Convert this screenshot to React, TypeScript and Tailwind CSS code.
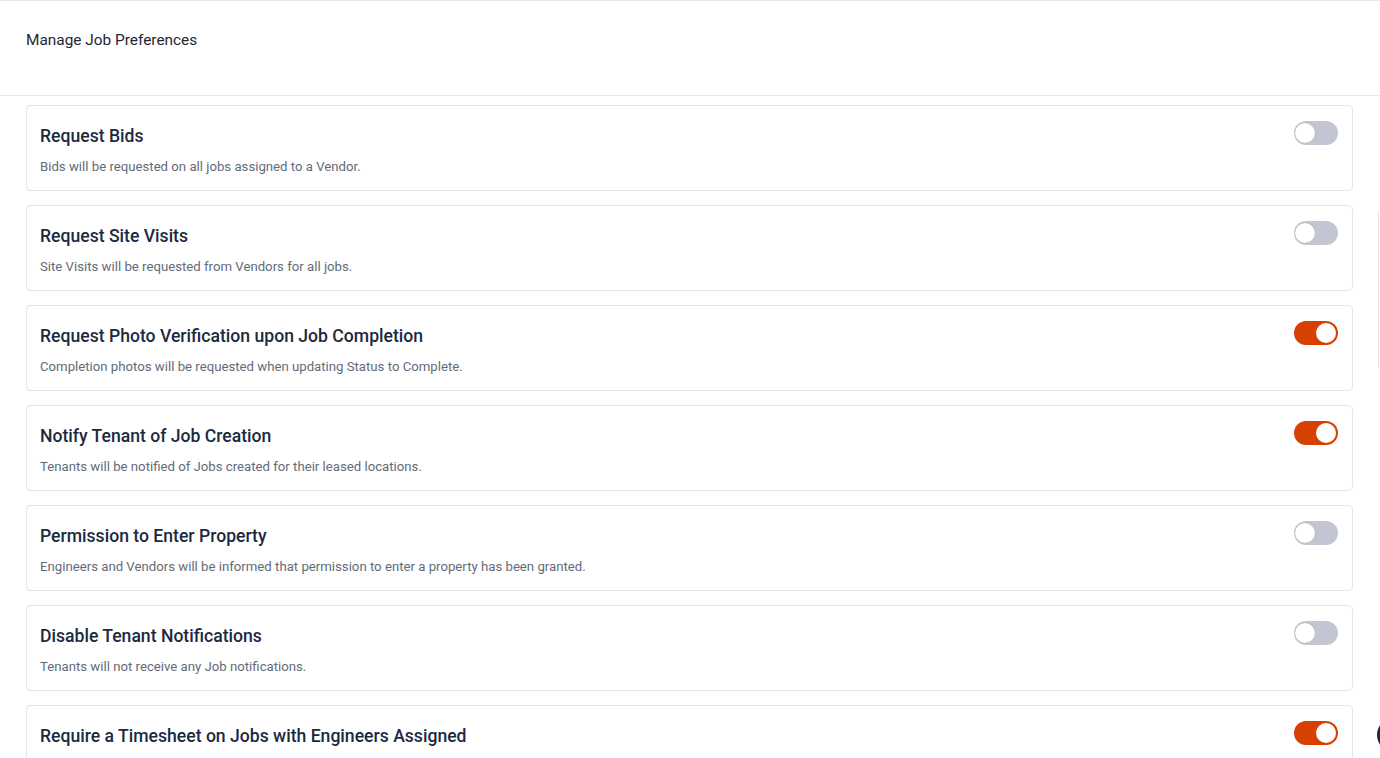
import { type FC, useState } from "react";

type Preference = {
  id: string;
  title: string;
  description: string;
  enabled: boolean;
};

const initialPreferences: Preference[] = [
  {
    id: "bids",
    title: "Request Bids",
    description: "Bids will be requested on all jobs assigned to a Vendor.",
    enabled: false,
  },
  {
    id: "siteVisits",
    title: "Request Site Visits",
    description: "Site Visits will be requested from Vendors for all jobs.",
    enabled: false,
  },
  {
    id: "photoVerification",
    title: "Request Photo Verification upon Job Completion",
    description:
      "Completion photos will be requested when updating Status to Complete.",
    enabled: true,
  },
  {
    id: "notifyTenant",
    title: "Notify Tenant of Job Creation",
    description:
      "Tenants will be notified of Jobs created for their leased locations.",
    enabled: true,
  },
  {
    id: "permission",
    title: "Permission to Enter Property",
    description:
      "Engineers and Vendors will be informed that permission to enter a property has been granted.",
    enabled: false,
  },
  {
    id: "disableTenant",
    title: "Disable Tenant Notifications",
    description: "Tenants will not receive any Job notifications.",
    enabled: false,
  },
  {
    id: "timesheet",
    title: "Require a Timesheet on Jobs with Engineers Assigned",
    description:
      "Engineers will be required to submit a timesheet before completing a Job.",
    enabled: true,
  },
];

type SwitchProps = {
  checked: boolean;
  onChange: (checked: boolean) => void;
};

const Switch: FC<SwitchProps> = ({ checked, onChange }) => {
  return (
    <button
      type="button"
      role="switch"
      aria-checked={checked}
      onClick={() => onChange(!checked)}
      className={
        checked
          ? "relative h-[24px] w-[44px] shrink-0 rounded-full bg-[#d64000] transition-colors"
          : "relative h-[24px] w-[44px] shrink-0 rounded-full bg-[#c4c5d3] transition-colors"
      }
    >
      <span
        className={
          checked
            ? "absolute top-[2px] left-[2px] h-[20px] w-[20px] translate-x-[20px] rounded-full bg-white transition-transform"
            : "absolute top-[2px] left-[1px] h-[20px] w-[20px] rounded-full bg-white shadow-[0_0_1px_rgba(0,0,0,0.25)] transition-transform"
        }
      />
    </button>
  );
};

export default function App() {
  const [preferences, setPreferences] = useState(initialPreferences);

  const toggle = (id: string, enabled: boolean) =>
    setPreferences((items) =>
      items.map((item) => (item.id === id ? { ...item, enabled } : item)),
    );

  return (
    <div
      className="relative h-[758px] overflow-hidden bg-white"
      style={{ fontFamily: "Roboto, 'Liberation Sans', sans-serif" }}
    >
      <header className="h-[96px] border-t border-b border-[#e8e8ee] px-[26px] pt-[29px]">
        <h1 className="text-[15.4px] leading-[20px] text-[#1f2633]">
          Manage Job Preferences
        </h1>
      </header>

      <div className="flex flex-col gap-[14px] pt-[9px] pl-[26px] pr-[27px]">
        {preferences.map((pref) => (
          <div
            key={pref.id}
            className="flex items-start justify-between rounded-[4px] border border-[#e4e4ec] pt-[18px] pb-[13px] pl-[13px] pr-[14px]"
          >
            <div>
              <p className="text-[17.6px] leading-[24px] font-medium text-[#1b2a41]">
                {pref.title}
              </p>
              <p className="mt-[9px] text-[13.2px] leading-[20px] text-[#646b78]">
                {pref.description}
              </p>
            </div>
            <div className="-mt-[3px]">
              <Switch
                checked={pref.enabled}
                onChange={(checked) => toggle(pref.id, checked)}
              />
            </div>
          </div>
        ))}
      </div>

      {/* scroll track and floating help button peeking from the right edge */}
      <div className="absolute top-[212px] right-[1px] h-[156px] w-px bg-[#e2e2e8]" />
      <div className="absolute top-[718px] left-[1377px] h-[34px] w-[34px] rounded-full bg-[#1b2a41]" />
    </div>
  );
}
